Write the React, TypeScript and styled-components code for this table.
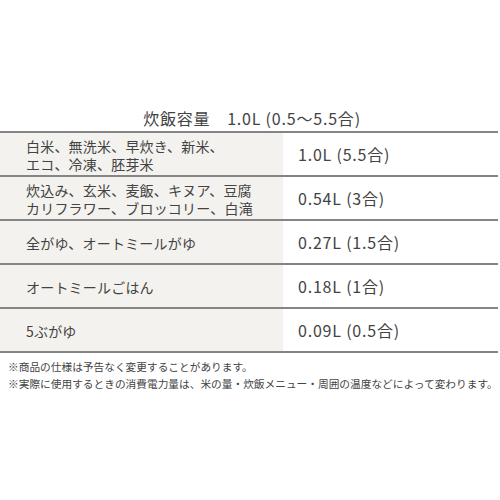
import styled, { createGlobalStyle } from "styled-components";

const GlobalStyle = createGlobalStyle`
  body {
    margin: 0;
    background: #ffffff;
    font-family: "Noto Sans CJK JP", "Noto Sans", sans-serif;
    color: #434343;
  }
`;

const rows = [
  { menu: ["白米、無洗米、早炊き、新米、", "エコ、冷凍、胚芽米"], amount: "1.0L (5.5合)" },
  { menu: ["炊込み、玄米、麦飯、キヌア、豆腐", "カリフラワー、ブロッコリー、白滝"], amount: "0.54L (3合)" },
  { menu: ["全がゆ、オートミールがゆ"], amount: "0.27L (1.5合)" },
  { menu: ["オートミールごはん"], amount: "0.18L (1合)" },
  { menu: ["5ぶがゆ"], amount: "0.09L (0.5合)" },
];

function App() {
  return (
    <>
      <GlobalStyle />
      <Page>
        <Caption>炊飯容量　1.0L (0.5～5.5合)</Caption>
        <Table>
          {rows.map((row) => (
            <Row key={row.amount}>
              <MenuCell>
                {row.menu.map((line) => (
                  <span key={line}>{line}</span>
                ))}
              </MenuCell>
              <AmountCell>{row.amount}</AmountCell>
            </Row>
          ))}
        </Table>
        <Notes>
          <p>※商品の仕様は予告なく変更することがあります。</p>
          <p>※実際に使用するときの消費電力量は、米の量・炊飯メニュー・周囲の温度などによって変わります。</p>
        </Notes>
      </Page>
    </>
  );
}
export default App;

const Page = styled.div`
  width: 500px;
  height: 500px;
  padding-top: 105px;
  box-sizing: border-box;
`;

const Caption = styled.div`
  text-align: center;
  font-size: 16px;
  line-height: 26px;
  letter-spacing: 0.8px;
  padding-left: 4px;
`;

const Table = styled.div`
  width: 498px;
  border-top: 2px solid #858585;
`;

const Row = styled.div`
  display: grid;
  grid-template-columns: 283px 1fr;
  height: 42px;
  border-bottom: 2px solid #858585;
`;

const MenuCell = styled.div`
  display: flex;
  flex-direction: column;
  justify-content: center;
  padding-left: 26px;
  padding-top: 1px;
  background: #f3f2ee;
  font-size: 14px;
  line-height: 18px;
  letter-spacing: 0.2px;
  white-space: nowrap;
`;

const AmountCell = styled.div`
  display: flex;
  align-items: center;
  padding-left: 15px;
  font-size: 16px;
  letter-spacing: 0.8px;
`;

const Notes = styled.div`
  padding: 5px 0 0 8px;
  font-size: 10.7px;
  line-height: 17px;
  white-space: nowrap;

  p {
    margin: 0;
  }
`;
